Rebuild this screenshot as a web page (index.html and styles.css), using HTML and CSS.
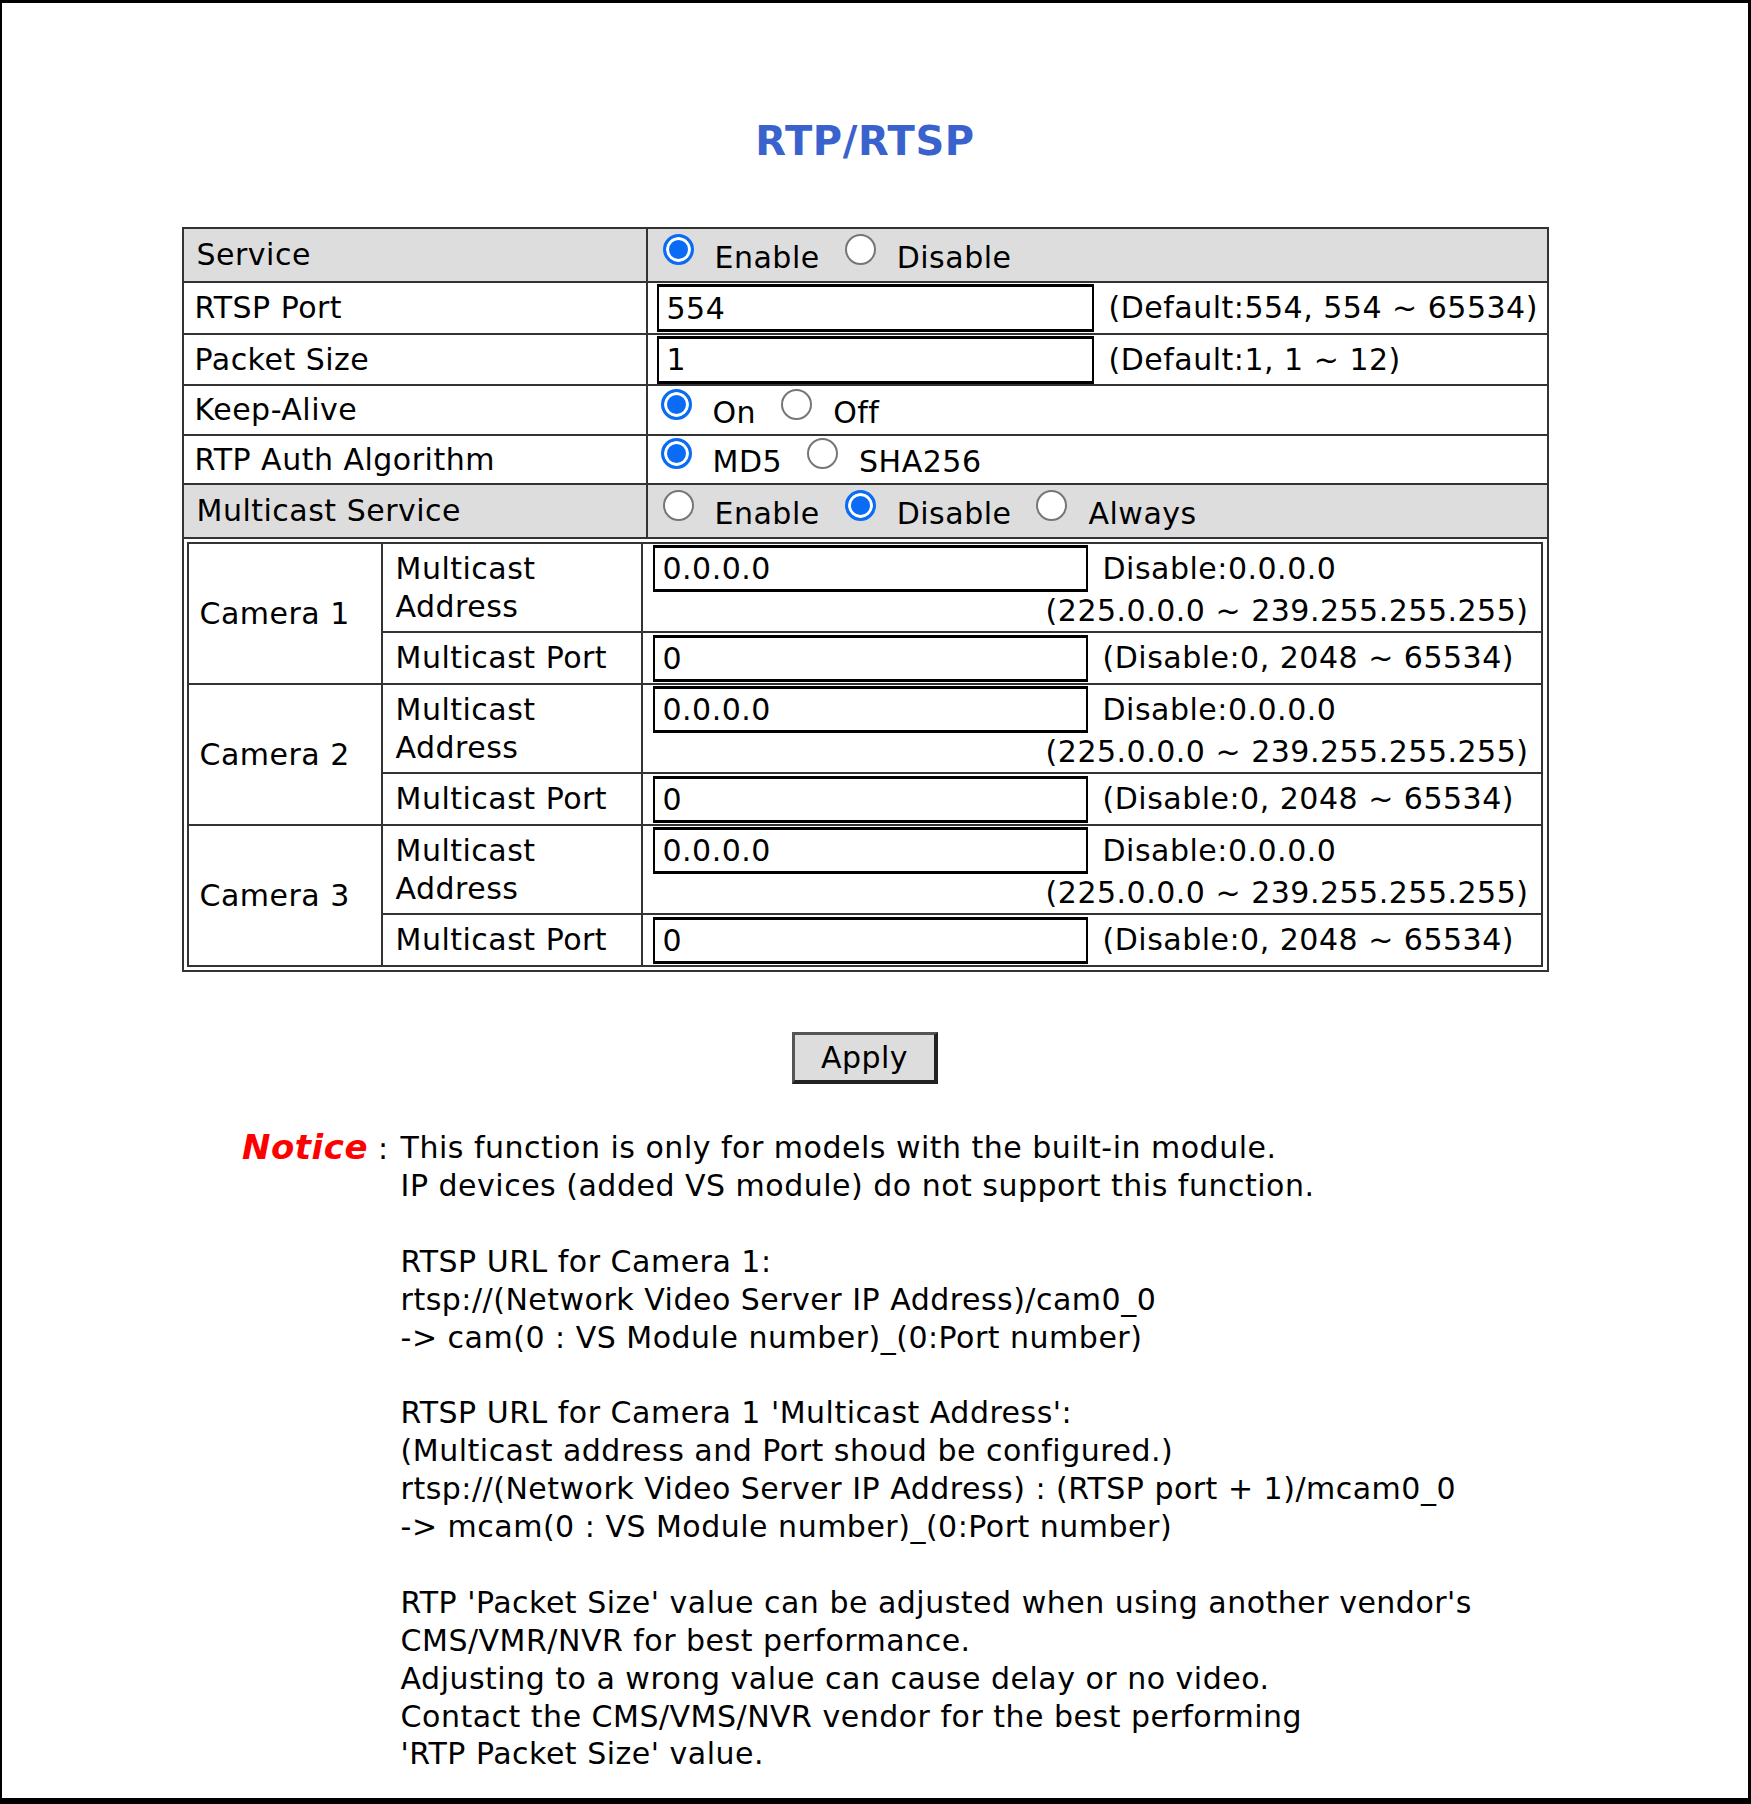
FILE: index.html
```html
<!DOCTYPE html>
<html lang="en">
<head>
<meta charset="utf-8">
<title>RTP/RTSP</title>
<link rel="stylesheet" href="styles.css">
</head>
<body>
<div class="frame">
  <div class="page">
    <h1 class="title">RTP/RTSP</h1>

    <table class="main">
      <colgroup><col class="c-lbl"><col class="c-val"></colgroup>
      <tr class="row-hd r-svc">
        <td class="lbl lbl-hd">Service</td>
        <td class="val val-hd"><label class="opt"><input type="radio" class="rb" name="svc" checked><span>Enable</span></label><label class="opt"><input type="radio" class="rb" name="svc"><span>Disable</span></label></td>
      </tr>
      <tr class="r-port">
        <td class="lbl">RTSP Port</td>
        <td class="val val-in"><div class="field"><input type="text" class="tin tin-main" value="554"><span class="hint">(Default:554, 554 ~ 65534)</span></div></td>
      </tr>
      <tr class="r-pkt">
        <td class="lbl">Packet Size</td>
        <td class="val val-in"><div class="field"><input type="text" class="tin tin-main" value="1"><span class="hint">(Default:1, 1 ~ 12)</span></div></td>
      </tr>
      <tr class="r-ka">
        <td class="lbl">Keep-Alive</td>
        <td class="val"><label class="opt"><input type="radio" class="rb" name="ka" checked><span>On</span></label><label class="opt"><input type="radio" class="rb" name="ka"><span>Off</span></label></td>
      </tr>
      <tr class="r-auth">
        <td class="lbl">RTP Auth Algorithm</td>
        <td class="val"><label class="opt"><input type="radio" class="rb" name="auth" checked><span>MD5</span></label><label class="opt"><input type="radio" class="rb" name="auth"><span>SHA256</span></label></td>
      </tr>
      <tr class="row-hd r-mc">
        <td class="lbl lbl-hd">Multicast Service</td>
        <td class="val val-hd"><label class="opt"><input type="radio" class="rb" name="mc"><span>Enable</span></label><label class="opt"><input type="radio" class="rb" name="mc" checked><span>Disable</span></label><label class="opt"><input type="radio" class="rb" name="mc"><span>Always</span></label></td>
      </tr>
      <tr>
        <td class="nest-wrap" colspan="2">
          <table class="nest">
            <colgroup><col class="n-cam"><col class="n-lbl"><col class="n-val"></colgroup>
            <tr class="r-addr">
              <td class="cam" rowspan="2">Camera 1</td>
              <td class="sub">Multicast<br>Address</td>
              <td class="nval"><div class="field"><input type="text" class="tin" value="0.0.0.0"><span class="hint">Disable:0.0.0.0</span></div><div class="range">(225.0.0.0 ~ 239.255.255.255)</div></td>
            </tr>
            <tr class="r-nport">
              <td class="sub">Multicast Port</td>
              <td class="nval"><div class="field"><input type="text" class="tin" value="0"><span class="hint">(Disable:0, 2048 ~ 65534)</span></div></td>
            </tr>
            <tr class="r-addr">
              <td class="cam" rowspan="2">Camera 2</td>
              <td class="sub">Multicast<br>Address</td>
              <td class="nval"><div class="field"><input type="text" class="tin" value="0.0.0.0"><span class="hint">Disable:0.0.0.0</span></div><div class="range">(225.0.0.0 ~ 239.255.255.255)</div></td>
            </tr>
            <tr class="r-nport">
              <td class="sub">Multicast Port</td>
              <td class="nval"><div class="field"><input type="text" class="tin" value="0"><span class="hint">(Disable:0, 2048 ~ 65534)</span></div></td>
            </tr>
            <tr class="r-addr">
              <td class="cam" rowspan="2">Camera 3</td>
              <td class="sub">Multicast<br>Address</td>
              <td class="nval"><div class="field"><input type="text" class="tin" value="0.0.0.0"><span class="hint">Disable:0.0.0.0</span></div><div class="range">(225.0.0.0 ~ 239.255.255.255)</div></td>
            </tr>
            <tr class="r-nport">
              <td class="sub">Multicast Port</td>
              <td class="nval"><div class="field"><input type="text" class="tin" value="0"><span class="hint">(Disable:0, 2048 ~ 65534)</span></div></td>
            </tr>
          </table>
        </td>
      </tr>
    </table>

    <div class="actions"><button type="button" class="apply">Apply</button></div>

    <div class="notice">
      <div class="notice-head"><span class="notice-word">Notice</span> :</div>
      <div class="notice-body">
        <p>This function is only for models with the built-in module.<br>IP devices (added VS module) do not support this function.</p>
        <p>RTSP URL for Camera 1:<br>rtsp://(Network Video Server IP Address)/cam0_0<br>-&gt; cam(0 : VS Module number)_(0:Port number)</p>
        <p>RTSP URL for Camera 1 'Multicast Address':<br>(Multicast address and Port shoud be configured.)<br>rtsp://(Network Video Server IP Address) : (RTSP port + 1)/mcam0_0<br>-&gt; mcam(0 : VS Module number)_(0:Port number)</p>
        <p>RTP 'Packet Size' value can be adjusted when using another vendor's<br>CMS/VMR/NVR for best performance.<br>Adjusting to a wrong value can cause delay or no video.<br>Contact the CMS/VMS/NVR vendor for the best performing<br>'RTP Packet Size' value.</p>
      </div>
    </div>
  </div>
</div>
</body>
</html>
```

FILE: styles.css
```css
html, body {
  margin: 0;
  padding: 0;
  background: #fff;
}

body {
  font-family: "DejaVu Sans", Verdana, sans-serif;
  font-size: 30px;
  letter-spacing: 0.5px;
  color: #000;
}

.frame {
  box-sizing: border-box;
  width: 1751px;
  height: 1804px;
  border-style: solid;
  border-color: #000;
  border-width: 3px 3px 6px 2px;
  overflow: hidden;
}

.page {
  padding-right: 20px;
}

.title {
  margin: 114px 0 62px;
  font-size: 40px;
  line-height: 48px;
  font-weight: bold;
  letter-spacing: 0.6px;
  color: #3a62cc;
  text-align: center;
}

/* main table */
.main {
  width: 1367px;
  margin: 0 auto;
  border-collapse: collapse;
  table-layout: fixed;
  border: 2px solid #333;
}

.c-lbl { width: 464px; }

.main > tbody > tr > td {
  border: 2px solid #333;
  padding: 0;
}

.r-svc { height: 54px; }
.r-port { height: 52px; }
.r-pkt { height: 51px; }
.r-ka { height: 50px; }
.r-auth { height: 49px; }
.r-mc { height: 54px; }

.row-hd > td {
  background: #dddddd;
}

.lbl {
  padding-left: 11px !important;
  line-height: 38px;
  vertical-align: middle;
  white-space: nowrap;
}

.lbl-hd {
  padding-left: 13px !important;
}

.val {
  padding-left: 13px !important;
  vertical-align: middle;
  white-space: nowrap;
  line-height: 38px;
}

.val-hd {
  padding-left: 15px !important;
}

.val-in {
  padding-left: 9px !important;
}

/* radios */
.opt {
  display: inline;
}

.opt + .opt {
  margin-left: 25px;
}

.rb {
  -webkit-appearance: none;
  appearance: none;
  box-sizing: border-box;
  width: 31px;
  height: 31px;
  margin: 0 21px 0 0;
  border: 2px solid #767676;
  border-radius: 50%;
  background: #fff;
  vertical-align: 3px;
}

.rb:checked {
  border: 3px solid #0a6cf5;
  background: #0a6cf5;
  box-shadow: inset 0 0 0 3px #fff;
}

/* text inputs */
.field {
  display: flex;
  align-items: center;
}

.tin {
  box-sizing: border-box;
  width: 435px;
  height: 47px;
  margin: 0;
  padding: 0 0 0 8px;
  border-style: solid;
  border-color: #000;
  border-width: 3px 2px 3px 2px;
  font-family: "DejaVu Sans", Verdana, sans-serif;
  font-size: 30px;
  letter-spacing: 0.5px;
  color: #000;
  background: #fff;
  flex: none;
}

.tin-main {
  width: 437px;
  height: 48px;
}

.hint {
  margin-left: 15px;
  white-space: nowrap;
}

/* nested camera table */
.nest-wrap {
  padding: 3px 4px 3px 3px !important;
}

.nest {
  width: 100%;
  border-collapse: collapse;
  table-layout: fixed;
  border: 2px solid #333;
}

.n-cam { width: 194px; }
.n-lbl { width: 260px; }

.nest td {
  border: 2px solid #333;
  padding: 0;
  line-height: 38px;
}

.r-addr { height: 89px; }
.r-nport { height: 52px; }

.cam {
  padding-left: 11px !important;
  vertical-align: middle;
}

.sub {
  padding-left: 13px !important;
  vertical-align: middle;
  white-space: nowrap;
}

.nval {
  padding: 1px 12px 0 10px !important;
  vertical-align: top;
}

.r-nport .nval {
  vertical-align: middle;
  padding-top: 0 !important;
}

.range {
  text-align: right;
  white-space: nowrap;
}

/* apply */
.actions {
  display: flex;
  justify-content: center;
  margin-top: 60px;
}

.apply {
  box-sizing: border-box;
  width: 146px;
  height: 52px;
  margin: 0;
  padding: 0;
  font-family: "DejaVu Sans", Verdana, sans-serif;
  font-size: 30px;
  letter-spacing: 0.5px;
  color: #000;
  background: #dddddd;
  border-style: solid;
  border-width: 3px 4px 4px 3px;
  border-color: #555 #222 #222 #555;
}

/* notice */
.notice {
  display: flex;
  margin: 45px 0 0 240px;
  line-height: 37.9px;
}

.notice-head {
  white-space: nowrap;
  margin-right: 12px;
}

.notice-word {
  color: #ff0000;
  font-weight: bold;
  font-style: italic;
  font-size: 34px;
}

.notice-body p {
  margin: 0 0 37.9px;
  white-space: nowrap;
}

.notice-body p:last-child {
  margin-bottom: 0;
}
```
